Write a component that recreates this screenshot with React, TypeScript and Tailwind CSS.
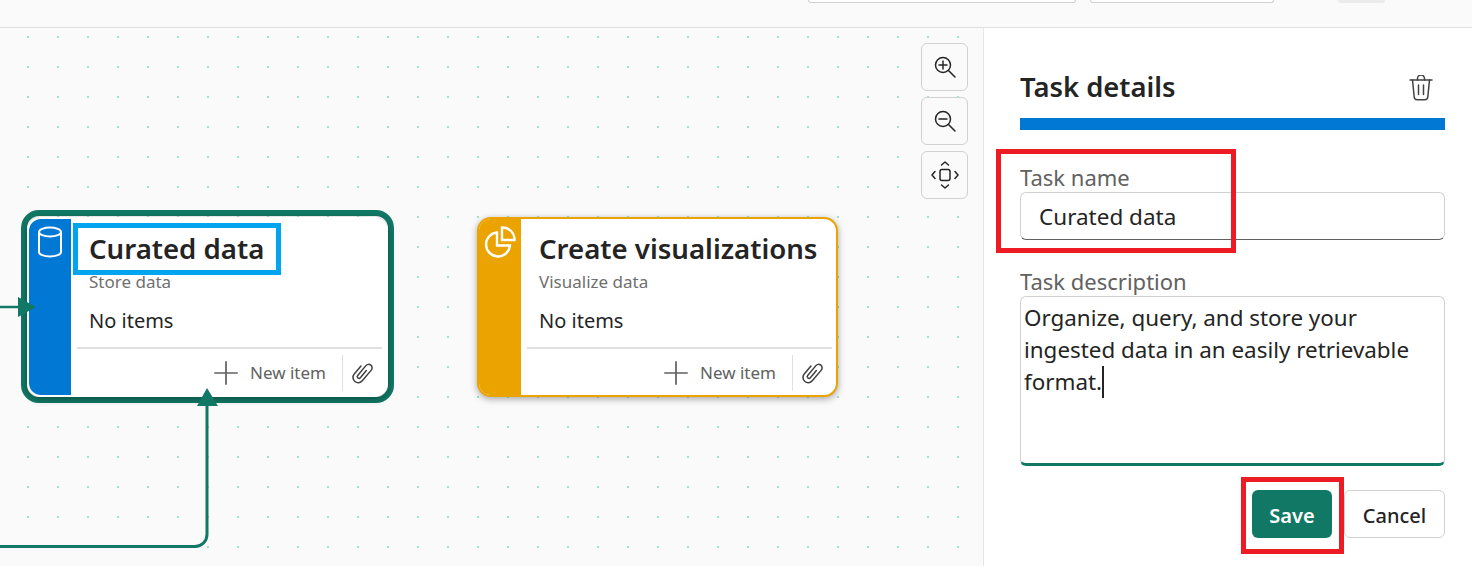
import { Plus } from "lucide-react";

const FONT = "font-['Noto_Sans','Open_Sans',sans-serif]";

function DatabaseIcon() {
  return (
    <svg width="26" height="32" viewBox="0 0 26 32" fill="none" stroke="white" strokeWidth="2">
      <ellipse cx="13" cy="6" rx="11" ry="4.5" />
      <path d="M2 6v20c0 2.5 5 4.5 11 4.5s11-2 11-4.5V6" />
    </svg>
  );
}

function PieIcon() {
  return (
    <svg width="32" height="32" viewBox="0 0 32 32" fill="none" stroke="white" strokeWidth="2.4">
      <path d="M13 6.5a12 12 0 1 0 13 13H13z" />
      <path d="M18 1.5a12 12 0 0 1 12.5 12.5H18z" />
    </svg>
  );
}

function ClipIcon() {
  return (
    <svg width="28" height="28" viewBox="0 0 24 24" fill="none" stroke="#424242" strokeWidth="1.3" strokeLinecap="round">
      <path transform="rotate(40 12 12)" d="M7.500 8v9a4.500 4.500 0 0 0 9 0V5a3 3 0 0 0-6 0v11a1.500 1.500 0 0 0 3 0V8" />
    </svg>
  );
}

function ZoomIcon({ kind }: { kind: "in" | "out" }) {
  return (
    <svg width="24" height="24" viewBox="0 0 24 24" fill="none" stroke="#242424" strokeWidth="1.5" strokeLinecap="round">
      <circle cx="10" cy="10" r="7.5" />
      <path d="M15.5 15.5L22 22" />
      <path d="M6 10h8" />
      {kind === "in" && <path d="M10 6v8" />}
    </svg>
  );
}

function FitIcon() {
  return (
    <svg width="30" height="30" viewBox="0 0 30 30" fill="none" stroke="#242424" strokeWidth="1.5" strokeLinecap="round" strokeLinejoin="round">
      <rect x="10" y="9.5" width="10" height="11" rx="2" />
      <path d="M11.5 5L15 2l3.500 3" />
      <path d="M11.5 25l3.500 3 3.500-3" />
      <path d="M5 11.500L2 15l3 3.500" />
      <path d="M25 11.500L28 15l-3 3.500" />
    </svg>
  );
}

function TrashIcon() {
  return (
    <svg width="24" height="26" viewBox="0 0 24 26" fill="none" stroke="#424242" strokeWidth="1.5" strokeLinecap="round" strokeLinejoin="round">
      <path d="M1 5h22" />
      <path d="M8.500 5V3.500a2.500 2.500 0 0 1 7 0V5" />
      <path d="M3.500 5l1.700 17a3 3 0 0 0 3 2.700h7.600a3 3 0 0 0 3-2.700L20.500 5" />
      <path d="M9.500 10v9.500" />
      <path d="M14.500 10v9.500" />
    </svg>
  );
}

function TaskNode({
  title,
  subtitle,
  icon,
  strip,
  edge,
}: {
  title: string;
  subtitle: string;
  icon: React.ReactNode;
  strip: string;
  edge: string;
}) {
  return (
    <div className={`flex w-[361px] h-[180px] rounded-[14px] overflow-hidden bg-white border-2 shadow-[0_2px_7px_rgba(0,0,0,0.35)] ${edge}`}>
      <div className={`w-[42px] shrink-0 flex justify-center pt-[7px] ${strip}`}>{icon}</div>
      <div className="flex-1 flex flex-col min-w-0 pl-[6px] pr-[4px]">
        <div className="pl-[12px] pt-[9px] text-[27.600px] leading-[40px] font-semibold text-[#242424] whitespace-nowrap">{title}</div>
        <div className="pl-[12px] text-[17px] leading-[22px] mt-[3px] text-[#707070]">{subtitle}</div>
        <div className="pl-[12px] text-[20px] leading-[28px] mt-[14px] text-[#242424]">No items</div>
        <div className="mt-[12px] border-t-2 border-[#e0e0e0] flex-1 flex items-center justify-end pt-[2px]">
          <Plus size={38} strokeWidth={1.1} className="text-[#616161]" />
          <span className="ml-[5px] text-[17px] text-[#616161]">New item</span>
          <div className="ml-[16px] w-px h-[36px] bg-[#e0e0e0]" />
          <div className="ml-[5px] mr-[6px]"><ClipIcon /></div>
        </div>
      </div>
    </div>
  );
}

export default function App() {
  return (
    <div className={`w-[1472px] h-[566px] flex flex-col overflow-hidden bg-[#fafafa] ${FONT}`}>
      {/* Top bar, cut off by the crop */}
      <div className="h-[28px] shrink-0 border-b border-[#e0e0e0] flex items-start">
        <div className="ml-[808px] w-[268px] h-[3px] bg-white border border-t-0 border-[#d1d1d1] rounded-b-[6px]" />
        <div className="ml-[14px] w-[184px] h-[3px] bg-white border border-t-0 border-[#d1d1d1] rounded-b-[6px]" />
        <div className="ml-[64px] w-[47px] h-[3px] bg-[#ebebeb] rounded-b-[4px]" />
      </div>

      <div className="flex-1 flex min-h-0">
        {/* Canvas */}
        <div className="relative flex-1 bg-[#fafafa] bg-[radial-gradient(circle_at_28px_9px,#9fe3c8_1px,transparent_1.500px)] bg-[size:30px_30px]">
          <div className="absolute left-[21px] top-[182px] w-[373px] h-[193px] border-[6px] border-[#117865] rounded-[18px]" />
          <div className="absolute left-[27px] top-[189px]">
            <TaskNode title="Curated data" subtitle="Store data" icon={<DatabaseIcon />} strip="bg-[#0078d4]" edge="border-white" />
          </div>
          <div className="absolute left-[477px] top-[189px]">
            <TaskNode title="Create visualizations" subtitle="Visualize data" icon={<PieIcon />} strip="bg-[#eaa300]" edge="border-[#eaa300]" />
          </div>

          {/* Connectors */}
          <svg className="absolute left-0 top-0 pointer-events-none" width="260" height="538" fill="none">
            <path d="M0 279H20" stroke="#117865" strokeWidth="2.500" />
            <path d="M18 269L36 279L18 289z" fill="#117865" />
            <path d="M0 518.500H195a12 12 0 0 0 12-12V370" stroke="#117865" strokeWidth="3" />
            <path d="M207 360L218 378H197z" fill="#117865" />
          </svg>

          <div className="absolute left-[921px] top-[15px] flex flex-col gap-[6px]">
            <button className="w-[47px] h-[48px] flex items-center justify-center bg-[#fafafa] border border-[#d1d1d1] rounded-[6px]"><ZoomIcon kind="in" /></button>
            <button className="w-[47px] h-[48px] flex items-center justify-center bg-[#fafafa] border border-[#d1d1d1] rounded-[6px]"><ZoomIcon kind="out" /></button>
            <button className="w-[47px] h-[48px] flex items-center justify-center bg-[#fafafa] border border-[#d1d1d1] rounded-[6px]"><FitIcon /></button>
          </div>
        </div>

        {/* Task details panel */}
        <div className="relative w-[489px] shrink-0 bg-white border-l border-[#e6e6e6] pl-[36px] pr-[27px] flex flex-col">
          <div className="h-[90px] flex items-center justify-between pt-[28px]">
            <h1 className="text-[27.400px] font-semibold text-[#242424]">Task details</h1>
            <div className="mr-[12px] mt-[2px]"><TrashIcon /></div>
          </div>
          <div className="h-[12px] bg-[#0078d4]" />

          <label className="mt-[33px] mb-[1px] text-[22px] leading-[28px] text-[#616161]">Task name</label>
          <input
            readOnly
            value="Curated data"
            className="mt-0 h-[48px] px-[18px] pt-[1px] text-[22.500px] text-[#242424] bg-white border border-[#d1d1d1] border-b-[#616161] rounded-[6px] outline-none"
          />

          <label className="mt-[27px] mb-[1px] text-[22px] leading-[28px] text-[#616161]">Task description</label>
          <div className="h-[170px] px-[3px] pt-[5px] text-[22.400px] leading-[32px] text-[#242424] border border-[#d1d1d1] border-b-[3px] border-b-[#117865] rounded-[6px]">
            Organize, query, and store your ingested data in an easily retrievable format.
            <span className="inline-block w-[2px] h-[32px] bg-[#242424] align-top" />
          </div>

          <div className="mt-[24px] flex justify-end gap-[12px]">
            <button className="w-[80px] h-[48px] pt-[4px] bg-[#117865] text-white text-[20px] font-semibold rounded-[6px]">Save</button>
            <button className="w-[101px] h-[48px] pt-[4px] bg-white text-[#242424] text-[20px] font-medium border border-[#d1d1d1] rounded-[6px]">Cancel</button>
          </div>

          {/* Callouts drawn over the panel */}
          <div className="absolute left-[12px] top-[121px] w-[240px] h-[104px] border-[5px] border-[#ed1c24] pointer-events-none" />
          <div className="absolute left-[257px] top-[449px] w-[103px] h-[77px] border-[5px] border-[#ed1c24] pointer-events-none" />
        </div>
      </div>

      {/* Callout on the selected node title */}
      <div className="absolute left-[73px] top-[223px] w-[208px] h-[52px] border-[5px] border-[#00a4ef] pointer-events-none" />
    </div>
  );
}
